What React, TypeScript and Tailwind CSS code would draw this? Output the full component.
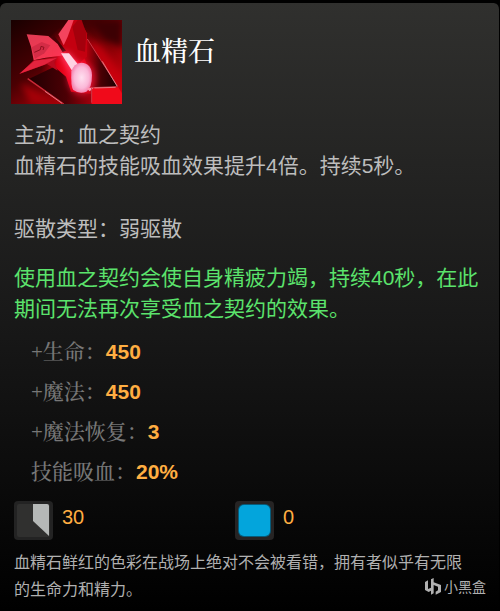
const sans = "font-['Liberation_Sans','Noto_Sans_CJK_SC',sans-serif]";
const serif = "font-['Liberation_Serif','Noto_Serif_CJK_SC','Noto_Sans_CJK_SC',serif]";

const stats = [
  { label: '+生命：', value: '450' },
  { label: '+魔法：', value: '450' },
  { label: '+魔法恢复：', value: '3' },
  { label: '技能吸血：', value: '20%' },
];

function ItemArt() {
  return (
    <svg className="h-[84px] w-[111px] shrink-0" viewBox="0 0 333 252" preserveAspectRatio="none" role="img" aria-label="血精石">
      <defs>
        <linearGradient id="back" x1="0" y1="0" x2="1" y2="1">
          <stop offset="0" stopColor="#180000" />
          <stop offset="0.4" stopColor="#4a0003" />
          <stop offset="0.7" stopColor="#a00008" />
          <stop offset="1" stopColor="#e0000e" />
        </linearGradient>
        <radialGradient id="glow">
          <stop offset="0" stopColor="#ff1028" />
          <stop offset="0.5" stopColor="#f00018" stopOpacity="0.85" />
          <stop offset="1" stopColor="#b00008" stopOpacity="0" />
        </radialGradient>
        <radialGradient id="gem">
          <stop offset="0" stopColor="#ffe0f0" />
          <stop offset="0.7" stopColor="#fbb8d8" />
          <stop offset="1" stopColor="#f58ab4" />
        </radialGradient>
        <linearGradient id="petal" x1="0" y1="0" x2="1" y2="1">
          <stop offset="0" stopColor="#e03c54" />
          <stop offset="1" stopColor="#ff3350" />
        </linearGradient>
        <linearGradient id="facet" x1="0" y1="0" x2="1" y2="0">
          <stop offset="0" stopColor="#c8000e" />
          <stop offset="0.5" stopColor="#4a0004" />
          <stop offset="1" stopColor="#1c0001" />
        </linearGradient>
        <linearGradient id="lower" x1="0" y1="0" x2="1" y2="0">
          <stop offset="0" stopColor="#200002" />
          <stop offset="0.6" stopColor="#4c0005" />
          <stop offset="1" stopColor="#a0000c" />
        </linearGradient>
        <filter id="soft" colorInterpolationFilters="sRGB"><feGaussianBlur stdDeviation="1.8" /></filter>
        <filter id="haze" colorInterpolationFilters="sRGB" x="-50%" y="-50%" width="200%" height="200%"><feGaussianBlur stdDeviation="10" /></filter>
      </defs>
      <rect width="333" height="252" fill="url(#back)" />
      <path d="M235 0H333V80L280 60Z" fill="#3c0003" filter="url(#haze)" />
      <path d="M240 60L275 80L333 170V240L250 245Z" fill="#d0000e" opacity="0.75" filter="url(#haze)" />
      <path d="M30 190L150 252H60Z" fill="#a40008" filter="url(#haze)" />
      <ellipse cx="185" cy="140" rx="95" ry="130" fill="url(#glow)" />
      <g filter="url(#soft)">
        <path d="M55 176L130 140L165 170L180 215L242 222V252H160Z" fill="url(#lower)" />
        <path d="M228 56L320 200L238 203L236 150L218 110Z" fill="url(#facet)" />
        <path d="M165 98L145 45L175 0H205L228 40L228 110L205 128Z" fill="#c40010" />
        <path d="M184 20L200 0H212L226 40L222 95L200 90Z" fill="#a4000c" />
        <path d="M142 43L172 0H188L170 50L158 76Z" fill="#f4445e" />
        <path d="M128 46L165 92L150 98L114 52Z" fill="#480005" />
        <path d="M47 43L112 48L140 72L160 106L104 113L68 121L60 80Z" fill="url(#petal)" />
        <path d="M62 82L92 66L118 76L100 100L72 116Z" fill="#d42c46" />
        <path d="M25 162L68 121L140 110L130 128L140 152L108 132Z" fill="#b80a1e" />
        <path d="M25 161L70 122L138 114L100 134Z" fill="#e4243e" />
      </g>
      <path d="M142 96L176 100L212 146L190 175Z" fill="#ff3a64" filter="url(#haze)" />
      <ellipse cx="211" cy="175" rx="42" ry="50" fill="#ff1840" opacity="0.65" filter="url(#haze)" />
      <g filter="url(#soft)">
        <path d="M150 100L174 100L208 142L188 160Z" fill="#ffd2e2" />
        <path d="M181 154Q188 130 211 128Q242 130 243 165Q243 205 226 215Q205 223 187 210Q179 200 181 154Z" fill="url(#gem)" />
        <path d="M241 203L322 202L333 220V252H242Z" fill="#f00a1a" />
        <path d="M226 205L250 202L236 214Z" fill="#ff9ab4" />
        <path d="M50 176L158 252" stroke="#c82a38" strokeWidth="4" />
        <path d="M229 57L320 200L242 203V248" fill="none" stroke="#c83a48" strokeWidth="3" />
      </g>
      <path d="M102 214L153 250M274 124L318 198M250 204L314 202" stroke="#f0a4ac" strokeWidth="2" />
      <path d="M70 97L88 89L90 79L99 82L96 90" fill="none" stroke="#90101f" strokeWidth="3" />
    </svg>
  );
}

function CooldownIcon() {
  return (
    <svg className="size-[39px] shrink-0" viewBox="0 0 39 39" role="img" aria-label="冷却时间">
      <rect width="39" height="39" rx="4" fill="#232323" />
      <rect x="3" y="3" width="33" height="33" rx="2" fill="#30302f" />
      <path d="M19 3H33Q35 3 35 5V35L19 20Z" fill="#b5b8b7" />
    </svg>
  );
}

function ManaIcon() {
  return (
    <svg className="size-[39px] shrink-0" viewBox="0 0 39 39" role="img" aria-label="魔法消耗">
      <rect width="39" height="39" rx="4" fill="#262424" />
      <rect x="3" y="3" width="33" height="33" rx="6" fill="#075b7a" />
      <rect x="4" y="4" width="31" height="31" rx="5" fill="#03a5dc" />
    </svg>
  );
}

function Brand() {
  return (
    <div className={`absolute right-[13px] bottom-[14px] flex items-center gap-[3px] text-[14px] leading-5 text-[#b0b0b0] ${sans}`}>
      <svg className="h-[18px] w-4" viewBox="0 0 48 54" fill="#b0b0b0" aria-hidden="true">
        <path d="M0 12L9 7V33L18 29V4L26 0V13L48 21V42L32 50V41L39 37V26L26 21V46L18 50V38L11 42L0 36Z" />
      </svg>
      <span>小黑盒</span>
    </div>
  );
}

export default function App() {
  return (
    <main lang="zh-CN" className="bg-black pt-[3px]">
      <article className={`relative rounded-t-md border-r border-black bg-linear-to-b/srgb from-[#30302e] via-[#171717] via-55% to-black pb-2 ${sans}`}>
        <header className="flex gap-3 px-[11px] pt-[17px]">
          <ItemArt />
          <h1 className={`pt-[14px] text-[27px] leading-9 font-medium text-white ${serif}`}>血精石</h1>
        </header>

        <section className="mt-[15px] pr-2 pl-[14px] text-[21px] leading-[31px] text-[#bdbdbd]">
          <p>主动：血之契约</p>
          <p>血精石的技能吸血效果提升4倍。持续5秒。</p>
          <p className="mt-8">驱散类型：弱驱散</p>
          <p className="mt-[18px] text-[#5be36c]">使用血之契约会使自身精疲力竭，持续40秒，在此期间无法再次享受血之契约的效果。</p>
        </section>

        <ul className="mt-2 pl-[31px] text-[21px] leading-10">
          {stats.map((stat) => (
            <li key={stat.label}>
              <span className={`font-medium text-[#777777] ${serif}`}>{stat.label}</span>
              <strong className="font-bold text-[#ffae42]">{stat.value}</strong>
            </li>
          ))}
        </ul>

        <div className="mt-[9px] grid grid-cols-[221px_1fr] pl-[14px] text-[20px] leading-8 text-[#ffae42]">
          <div className="flex gap-[9px]">
            <CooldownIcon />
            <span>30</span>
          </div>
          <div className="flex gap-[9px]">
            <ManaIcon />
            <span>0</span>
          </div>
        </div>

        <p className="mt-[9px] pr-6 pl-[14px] text-[16px] leading-[27px] text-[#b0b0b0]">
          血精石鲜红的色彩在战场上绝对不会被看错，拥有者似乎有无限的生命力和精力。
        </p>
        <Brand />
      </article>
    </main>
  );
}
